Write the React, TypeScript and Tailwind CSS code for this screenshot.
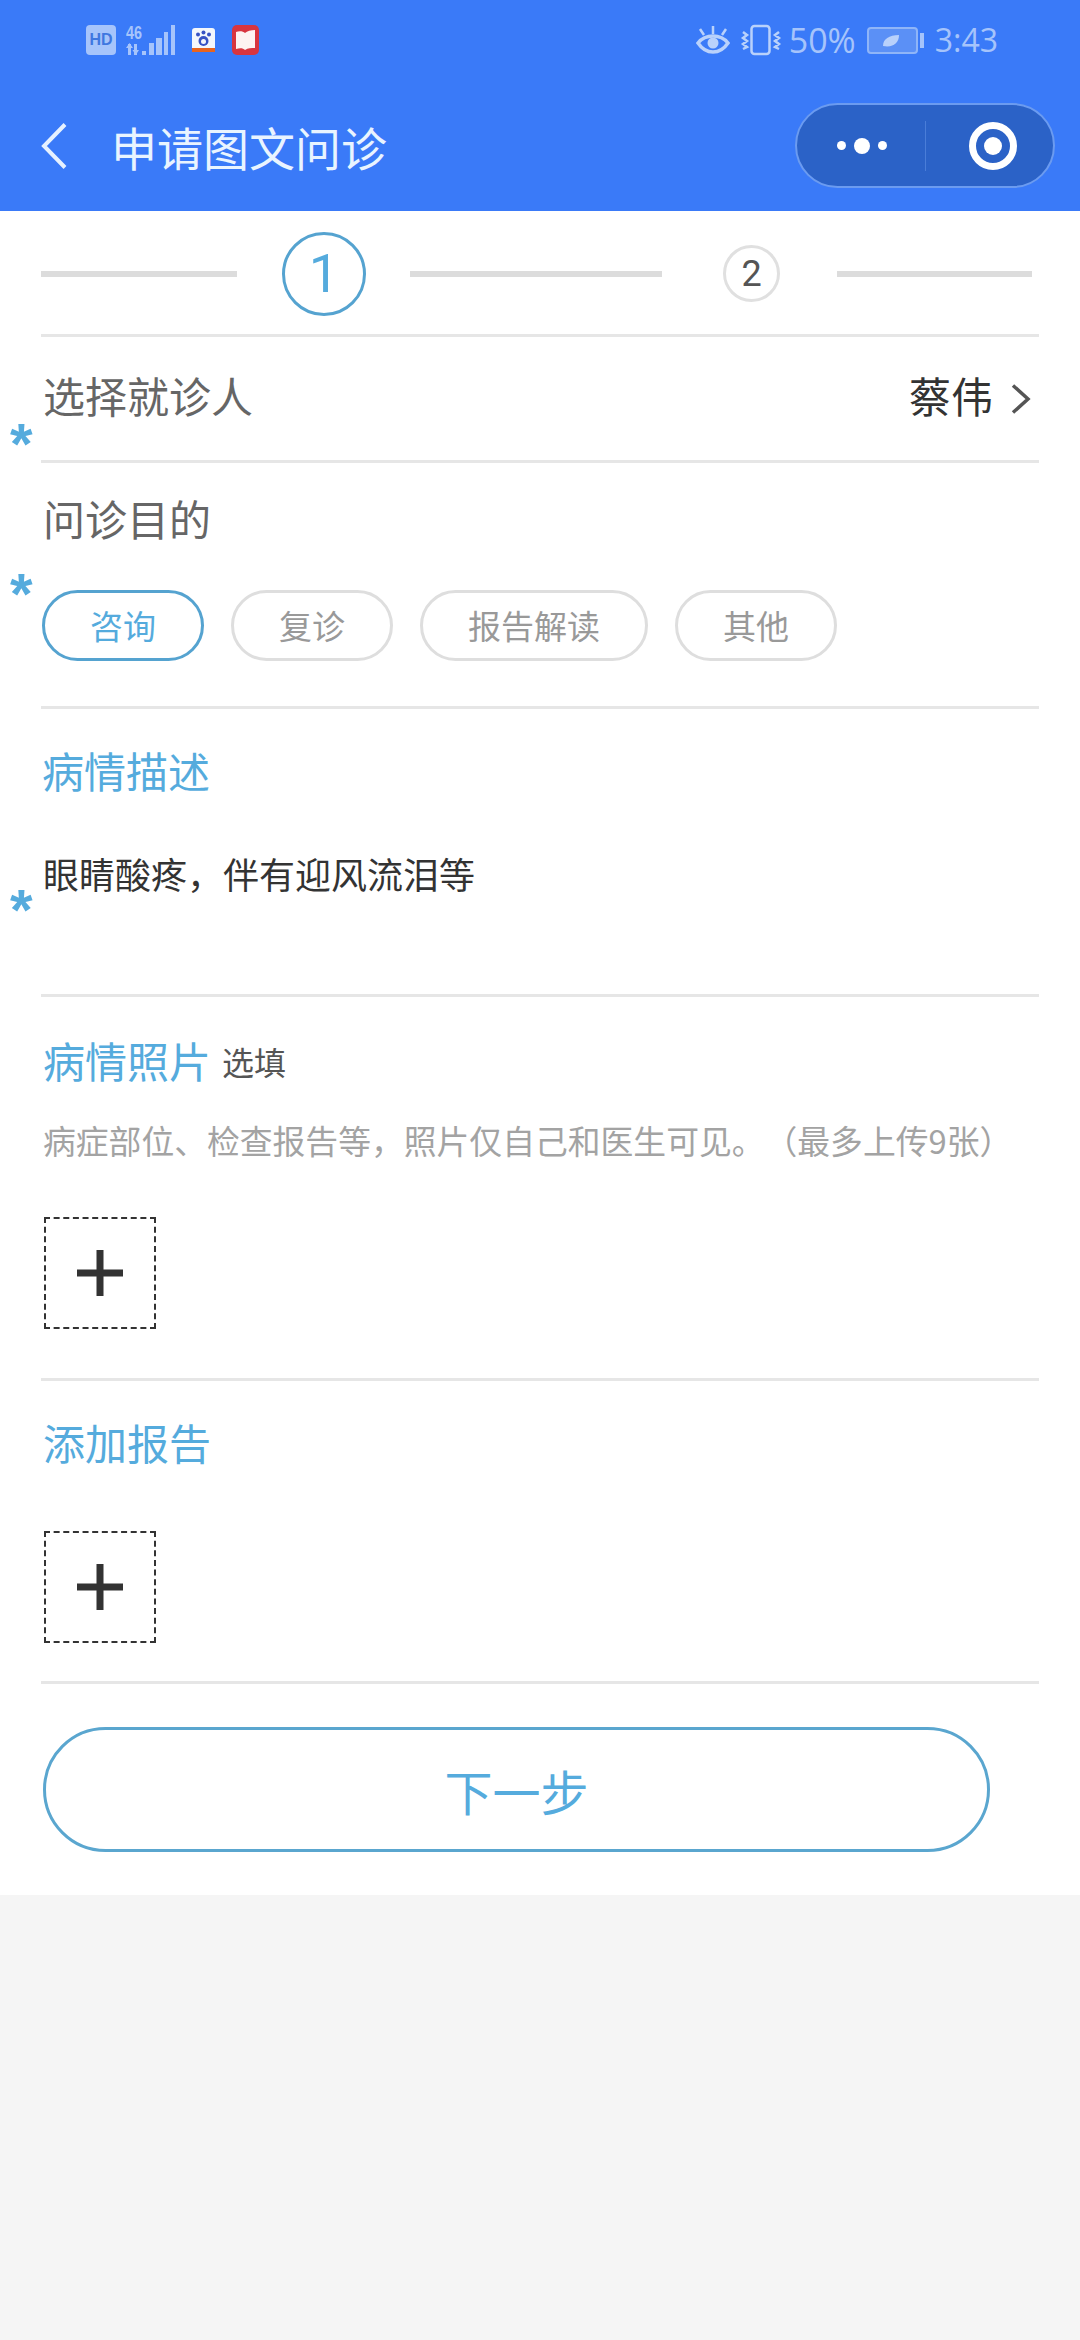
import React from 'react';

const cjk = "font-['Noto_Sans_CJK_SC','Noto_Sans',sans-serif]";

const purposes = [
  { label: '咨询', width: 'w-[162px]', active: true },
  { label: '复诊', width: 'w-[162px]', active: false },
  { label: '报告解读', width: 'w-[228px]', active: false },
  { label: '其他', width: 'w-[162px]', active: false },
];

const Star: React.FC<{ top: string }> = ({ top }) => (
  <span className={`absolute left-[-31px] ${top} font-['Liberation_Sans',sans-serif] text-[58px] leading-[58px] font-bold text-[#55abdd]`}>
    *
  </span>
);

const AddBox: React.FC = () => (
  <div className="flex h-[112px] w-[112px] items-center justify-center border-2 border-dashed border-[#333333]">
    <svg width="46" height="46" viewBox="0 0 46 46">
      <path d="M0 23H46M23 0V46" stroke="#333333" strokeWidth="7" />
    </svg>
  </div>
);

const StatusLeft: React.FC = () => (
  <div className="flex items-center">
    <div className="flex h-[30px] w-[30px] items-center justify-center rounded-[4px] bg-[#a6c4fb] font-['Liberation_Sans',sans-serif] text-[16px] leading-none font-bold text-[#3f77e0]">
      HD
    </div>
    <svg className="ml-[10px]" width="50" height="32" viewBox="0 0 50 32" fill="#a6c4fb">
      <text x="0" y="15" fontFamily="Liberation Sans" fontSize="19" fontWeight="700" textLength="16" lengthAdjust="spacingAndGlyphs">
        46
      </text>
      <path d="M2 20h3v11H2zM0 24l3.500-5l3.500 5zM8 20h3v11H8zM6.500 26h6.500l-3.250 5zM16 27h4v4h-4zM23 19h5v12h-5zM30 14h6v17h-6zM38 8h4v23h-4zM45 1h4v30h-4z" />
    </svg>
    <svg className="ml-[16px]" width="23" height="24" viewBox="0 0 23 24">
      <rect width="23" height="24" rx="3" fill="#f4f7fc" />
      <rect y="20" width="23" height="4" fill="#e8641f" />
      <circle cx="6" cy="6.500" r="2" fill="#3853c4" />
      <circle cx="11.500" cy="4.500" r="2" fill="#3853c4" />
      <circle cx="17" cy="6.500" r="2" fill="#3853c4" />
      <circle cx="11.500" cy="13" r="5" fill="#3853c4" />
      <circle cx="11.500" cy="13.500" r="2.500" fill="#f4f7fc" />
    </svg>
    <svg className="ml-[17px]" width="27" height="30" viewBox="0 0 27 30">
      <rect width="27" height="30" rx="5" fill="#d8353f" />
      <path d="M4 7c3-1 7-1 9 1c2-2 6-3 10-3v18c-4 0-7 0-10 2c-2-2-5-2-9-1z" fill="#fdf3f1" />
    </svg>
  </div>
);

const StatusRight: React.FC = () => (
  <div className="flex items-center font-['Open_Sans',sans-serif] text-[34px] text-[#a6c4fb]">
    <svg width="34" height="28" viewBox="0 0 34 28" fill="none" stroke="#b9d1fb" strokeWidth="3.5">
      <path d="M2 17c4-5 9-7 15-7s11 2 15 7c-4 6-9 9-15 9s-11-3-15-9z" />
      <circle cx="17" cy="17" r="5.500" fill="#b9d1fb" stroke="none" />
      <path d="M17 0v8M4 3l4 6M30 3l-4 6" strokeWidth="2.500" />
    </svg>
    <svg className="ml-[10px]" width="42" height="32" viewBox="0 0 42 32" fill="none" stroke="#b9d1fb" strokeWidth="2.500">
      <rect x="11.500" y="2" width="18" height="28" rx="3" />
      <path d="M3 8l4 3l-4 3l4 3l-4 3l4 3l-4 2M39 8l-4 3l4 3l-4 3l4 3l-4 3l4 2" />
    </svg>
    <span className="ml-[7px] leading-none">50%</span>
    <svg className="ml-[11px]" width="57" height="27" viewBox="0 0 57 27">
      <rect x="1" y="1" width="49" height="25" rx="3" fill="#5b90f6" stroke="#8fb5f8" strokeWidth="2" />
      <path d="M16 19c0-7 6-11 16-11c0 8-6 13-16 11z" fill="#b9d1fb" />
      <rect x="53" y="6" width="4" height="15" fill="#a6c4fb" />
    </svg>
    <span className="ml-[11px] text-[32px] leading-none">3:43</span>
  </div>
);

export default function App() {
  return (
    <div className={`min-h-[2340px] bg-[#f5f5f5] [text-spacing-trim:space-all] ${cjk}`}>
      <header className="flex h-[211px] flex-col bg-[#3a7af8]">
        <div className="flex h-[80px] items-center justify-between pl-[86px] pr-[82px]">
          <StatusLeft />
          <StatusRight />
        </div>
        <div className="flex flex-1 items-center pl-[41px] pr-[25px]">
          <svg width="26" height="46" viewBox="0 0 26 46" fill="none" stroke="#e6f1ff" strokeWidth="4">
            <path d="M24 1.500L3 23l21 21.500" />
          </svg>
          <h1 className="ml-[44px] text-[46px] leading-none font-normal text-[#e9f4ff]">申请图文问诊</h1>
          <div className="ml-auto flex h-[85px] w-[260px] items-center rounded-full border-2 border-[#6b9bf0] bg-[#2b62c7]">
            <div className="flex w-[128px] items-center justify-center gap-[8px] pl-[2px]">
              <span className="h-[9px] w-[9px] rounded-full bg-white" />
              <span className="h-[16px] w-[16px] rounded-full bg-white" />
              <span className="h-[9px] w-[9px] rounded-full bg-white" />
            </div>
            <div className="h-[50px] w-[1px] bg-[#4a7dd8]" />
            <div className="flex flex-1 items-center justify-center pl-[6px]">
              <div className="flex h-[48px] w-[48px] items-center justify-center rounded-full border-[7px] border-white">
                <span className="h-[18px] w-[18px] rounded-full bg-white" />
              </div>
            </div>
          </div>
        </div>
      </header>

      <main className="bg-white px-[41px]">
        <section className="flex h-[126px] items-center border-b-[3px] border-[#e6e6e6] pt-[2px]">
          <div className="h-[6px] w-[196px] bg-[#dcdcdc]" />
          <div className="ml-[45px] flex h-[84px] w-[84px] items-center justify-center rounded-full border-[3px] border-[#55a3d0] font-['Roboto',sans-serif] text-[54px] text-[#55abdd]">
            1
          </div>
          <div className="ml-[44px] h-[6px] w-[252px] bg-[#dcdcdc]" />
          <div className="ml-[61px] flex h-[57px] w-[57px] items-center justify-center rounded-full border-[3px] border-[#e0e0e0] font-['Roboto',sans-serif] text-[36px] text-[#555555]">
            2
          </div>
          <div className="ml-[57px] h-[6px] w-[195px] bg-[#dcdcdc]" />
        </section>

        <section className="relative flex h-[126px] items-center justify-between border-b-[3px] border-[#e6e6e6] pb-[8px] pl-[2px] pr-[8px]">
          <Star top="top-[78px]" />
          <span className="text-[42px] text-[#666666]">选择就诊人</span>
          <div className="flex items-center text-[#333333]">
            <span className="text-[42px]">蔡伟</span>
            <svg className="ml-[18px] mt-[9px]" width="20" height="30" viewBox="0 0 20 30" fill="none" stroke="#555555" strokeWidth="3.500">
              <path d="M2 1.500L17 15L2 28.500" />
            </svg>
          </div>
        </section>

        <section className="relative border-b-[3px] border-[#e6e6e6] pb-[45px] pt-[25px]">
          <Star top="top-[102px]" />
          <h2 className="pl-[2px] text-[42px] leading-[60px] font-normal text-[#666666]">问诊目的</h2>
          <div className="mt-[42px] flex gap-[27px] pl-[1px]">
            {purposes.map((p) => (
              <div
                key={p.label}
                className={`flex h-[71px] items-center justify-center rounded-full border-[3px] text-[33px] ${p.width} ${
                  p.active ? 'border-[#55a3d0] text-[#55abdd]' : 'border-[#dedede] text-[#999999]'
                }`}
              >
                {p.label}
              </div>
            ))}
          </div>
        </section>

        <section className="relative h-[288px] border-b-[3px] border-[#e6e6e6] pl-[1px] pt-[31px]">
          <Star top="top-[172px]" />
          <h2 className="text-[42px] leading-[60px] font-normal text-[#55abdd]">病情描述</h2>
          <p className="mt-[48px] pl-[1px] text-[36px] leading-[50px] text-[#333333]">眼睛酸疼，伴有迎风流泪等</p>
        </section>

        <section className="border-b-[3px] border-[#e6e6e6] pb-[49px] pl-[2px] pt-[33px]">
          <div className="flex items-center">
            <h2 className="text-[42px] leading-[60px] font-normal text-[#55abdd]">病情照片</h2>
            <span className="ml-[11px] mt-[2px] text-[32px] text-[#555555]">选填</span>
          </div>
          <p className="mt-[25px] whitespace-nowrap text-[32.8px] leading-[50px] text-[#a3a3a3]">
            病症部位、检查报告等，照片仅自己和医生可见。（最多上传9张）
          </p>
          <div className="mt-[52px] pl-[1px]">
            <AddBox />
          </div>
        </section>

        <section className="border-b-[3px] border-[#e6e6e6] pb-[38px] pl-[2px] pt-[31px]">
          <h2 className="text-[42px] leading-[60px] font-normal text-[#55abdd]">添加报告</h2>
          <div className="mt-[59px] pl-[1px]">
            <AddBox />
          </div>
        </section>

        <div className="pb-[43px] pl-[2px] pt-[43px]">
          <button className="flex h-[125px] w-[947px] items-center justify-center rounded-full border-[3px] border-[#5aa6cf] text-[48px] text-[#55abdd]">
            下一步
          </button>
        </div>
      </main>
    </div>
  );
}
